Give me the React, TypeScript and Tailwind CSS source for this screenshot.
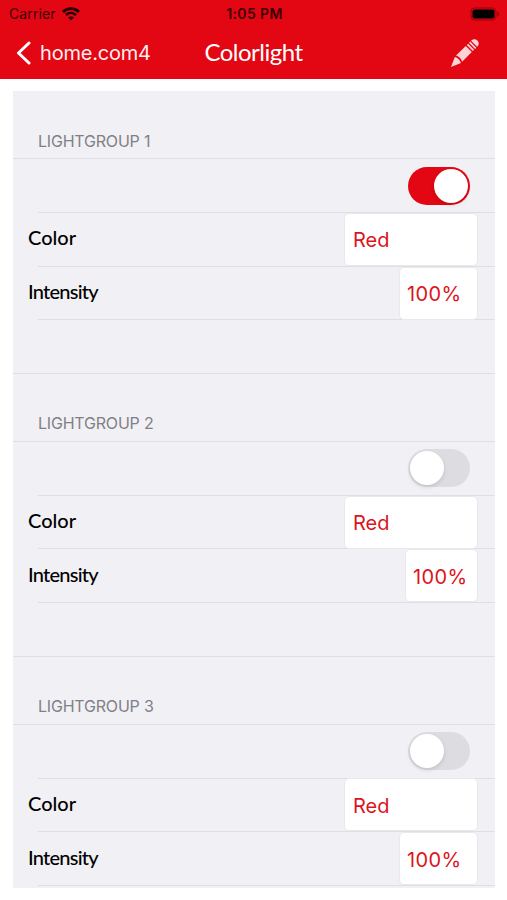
const groups = [
  { id: 1, on: true, color: "Red", intensity: "100%", narrow: false },
  { id: 2, on: false, color: "Red", intensity: "100%", narrow: true },
  { id: 3, on: false, color: "Red", intensity: "100%", narrow: false },
];

function StatusBar() {
  return (
    <div className="grid grid-cols-3 h-[27px] items-center pl-[9px] pr-[7px] text-[#3d0003] font-['Inter',sans-serif]">
      <div className="flex items-center gap-[6px]">
        <span className="text-[14px] tracking-[0.1px] leading-none">Carrier</span>
        <svg width="18" height="14" viewBox="0 0 18 14" fill="none" stroke="#250002">
          <path d="M1 4.9C5.5 .6 12.5 .6 17 4.9" strokeWidth="2.8" />
          <path d="M4 8C6.9 5.3 11.1 5.3 14 8" strokeWidth="2.5" />
          <path d="M9 13.4 6.1 10.5C7.7 9.1 10.3 9.1 11.9 10.5Z" fill="#250002" stroke="none" />
        </svg>
      </div>
      <span className="pt-px text-center text-[14px] font-semibold tracking-[0.4px] leading-none">1:05 PM</span>
      <div className="flex justify-end">
        <svg width="30" height="14" viewBox="0 0 30 14">
          <rect x="1" y="1" width="25" height="12" rx="3.5" fill="none" stroke="#930007" />
          <rect x="2.5" y="2.5" width="22" height="9" rx="2" fill="#000" />
          <path d="M27.5 4.5C29.7 5.2 29.7 8.8 27.5 9.5Z" fill="#930007" />
        </svg>
      </div>
    </div>
  );
}

function NavBar() {
  return (
    <div className="grid grid-cols-[1fr_auto_1fr] h-[52px] items-center pl-4 pr-[27px] text-white">
      <button className="flex items-center gap-[9px] text-[20px] tracking-[-0.2px] leading-none font-['Inter',sans-serif] text-[#ffeff0]">
        <svg width="15" height="24" viewBox="0 0 15 24" fill="none" stroke="#fff" strokeWidth="3" strokeLinecap="round" strokeLinejoin="round">
          <path d="M13 2 2.5 12 13 22" />
        </svg>
        home.com4
      </button>
      <h1 className="pl-[11px] pb-[2px] text-center text-[24px] tracking-[-0.5px] leading-none font-['Gill_Sans','Lato',sans-serif]">
        Colorlight
      </h1>
      <button className="flex justify-end">
        <svg width="30" height="30" viewBox="0 0 30 30" fill="#ffd3d6">
          <path d="M1 29 4.8 18.9Q9.4 20.2 11 25Z" />
          <path d="M6 17.6 15.8 8 21.8 14.1 12.1 23.8Q10.7 19.2 6 17.6Z" />
          <path d="M16.8 7 18.1 5.7 24.1 11.8 22.8 13.1Z" />
          <path d="M19 4.8 20.2 3.6 26.3 9.7 25.1 10.9Z" />
          <path d="M21.1 2.7C23 .7 25.6.7 27.4 2.5 29.3 4.3 29.2 6.8 27.2 8.8Z" />
        </svg>
      </button>
    </div>
  );
}

function Toggle({ on }: { on: boolean }) {
  return (
    <div
      className={`flex w-[62px] h-[38px] p-[2px] rounded-full ${
        on ? "justify-end bg-[#e30613]" : "justify-start bg-[#dddce1]"
      }`}
    >
      <div className="size-[34px] rounded-full bg-white shadow-[0_2px_4px_rgba(0,0,0,0.12)]" />
    </div>
  );
}

function Row({ label, tight, children }: any) {
  return (
    <div className="flex h-[53.75px]">
      <div className="w-[25px] shrink-0" />
      <div className="flex flex-1 items-center justify-between border-b border-[#dfdee3]">
        <span
          className={`-ml-[10px] pb-[4px] text-[20px] font-medium leading-none text-black font-['Gill_Sans','Lato',sans-serif] ${
            tight ? "tracking-[-0.75px]" : ""
          }`}
        >
          {label}
        </span>
        {children}
      </div>
    </div>
  );
}

function LightGroup({ group, last }: any) {
  return (
    <section>
      <h2 className="flex h-[67.8px] items-end border-b border-[#dfdee3] pl-[25px] pb-[8.5px] text-[16px] tracking-[-0.2px] leading-[18px] text-[#818086] font-['Inter',sans-serif]">
        LIGHTGROUP {group.id}
      </h2>
      <Row>
        <div className="mr-[25px]">
          <Toggle on={group.on} />
        </div>
      </Row>
      <Row label="Color">
        <div className="flex items-center w-[134px] h-[53px] mr-[17px] pl-2 pt-[2px] rounded-[5px] border border-[#e9e8ed] bg-white text-[20px] text-[#dc1420] font-['Inter',sans-serif]">
          {group.color}
        </div>
      </Row>
      <Row label="Intensity" tight>
        <div
          className={`flex items-center h-[53px] mr-[17px] pl-[7px] pt-[2px] rounded-[5px] border border-[#e9e8ed] bg-white text-[20px] tracking-[0.4px] text-[#dc1420] font-['Inter',sans-serif] ${
            group.narrow ? "w-[73px]" : "w-[79px]"
          }`}
        >
          {group.intensity}
        </div>
      </Row>
      {!last && <div className="h-[53.75px] border-b border-[#dfdee3]" />}
    </section>
  );
}

export default function App() {
  return (
    <div className="flex flex-col w-[507px] h-[900px] overflow-hidden bg-white">
      <header className="h-[79px] shrink-0 bg-[#e30613]">
        <StatusBar />
        <NavBar />
      </header>
      <main className="mt-[12.4px] ml-[13px] w-[482px] h-[796.4px] overflow-hidden bg-[#f1f0f5]">
        {groups.map((g, i) => (
          <LightGroup key={g.id} group={g} last={i === groups.length - 1} />
        ))}
      </main>
    </div>
  );
}
